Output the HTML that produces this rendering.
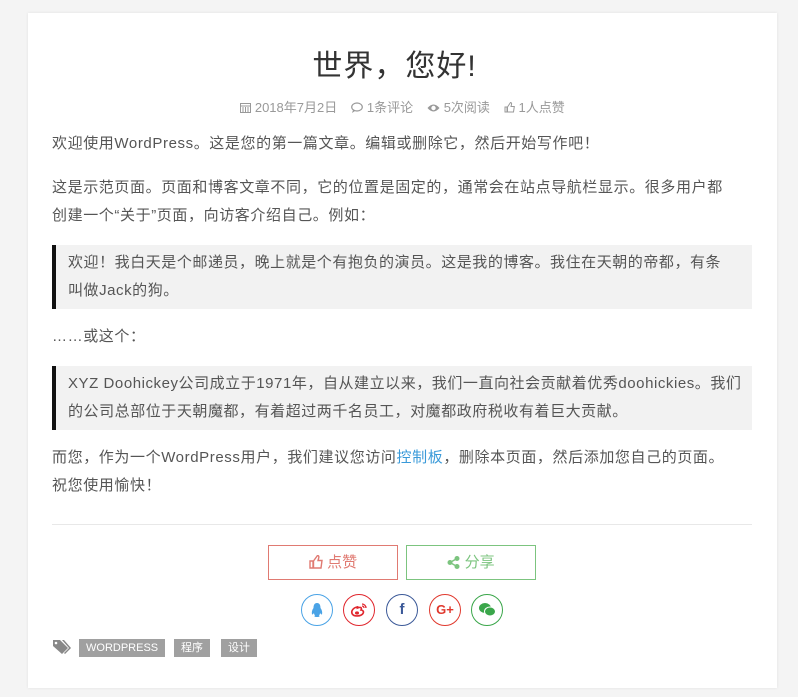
<!DOCTYPE html>
<html><head><meta charset="utf-8"><style>
*{margin:0;padding:0;box-sizing:border-box}
body{width:798px;height:697px;background:#f4f4f4;font-family:"Liberation Sans","Noto Sans CJK SC",sans-serif;color:#333;overflow:hidden}
.card{position:absolute;left:28px;top:13px;width:749px;height:675px;background:#fff;box-shadow:0 0 3px rgba(0,0,0,.08)}
.in{position:absolute;left:24px;width:700px}
h1{position:absolute;top:28px;left:-8px;width:100%;text-align:center;font-weight:normal;font-size:30px;color:#333;letter-spacing:1px}
.meta{position:absolute;top:84px;left:0;width:100%;text-align:center;font-size:13px;color:#999}
.meta span{margin:0 7px}
.meta svg{vertical-align:-1px}
p{font-size:15px;line-height:28px;color:#555;position:absolute;left:0;width:720px;letter-spacing:0.6px;white-space:nowrap}
.bq{position:absolute;left:0;width:700px;background:#f2f2f2;border-left:4px solid #111;padding:4px 12px;font-size:15px;line-height:28px;color:#555;letter-spacing:0.55px;white-space:nowrap;overflow:hidden}
a{color:#3a9ad9;text-decoration:none}
.hr{position:absolute;top:511px;left:0;width:700px;border-top:1px solid #e8e8e8}
.btn{position:absolute;top:532px;width:130px;height:35px;border:1px solid;text-align:center;line-height:33px;font-size:15px}
.btn svg{vertical-align:-2px}
.c{position:absolute;top:581px;width:32px;height:32px;border-radius:50%;border:1px solid;text-align:center;line-height:30px;font-size:15px;font-weight:bold}
.c svg{margin-top:7px}
.tag{position:absolute;top:626px;height:18px;background:#a0a0a0;color:#fff;font-size:11px;line-height:18px;padding:0 7px}
</style></head><body>
<div class="card">
<h1>世界，您好!</h1>
<div class="meta"><span><svg width="11" height="11"><rect x="0.5" y="1.5" width="10" height="9" fill="none" stroke="#999"/><path d="M0 4h11M3 5v5M5.5 5v5M8 5v5" stroke="#999"/></svg> 2018年7月2日</span><span><svg width="12" height="11"><ellipse cx="6" cy="5" rx="5.3" ry="4" fill="none" stroke="#999" stroke-width="1.2"/><path d="M2 8l-1 3 3-2" fill="#999"/></svg> 1条评论</span><span><svg width="13" height="10"><path d="M0.5 5Q6.5-2 12.5 5Q6.5 12 0.5 5z" fill="#999"/><circle cx="6.5" cy="5" r="2.2" fill="#fff"/></svg> 5次阅读</span><span><svg width="11" height="11"><path d="M1 5h2v5H1zM3.5 5l3-4.5c1 0 1.3 1 1 2L7 4.5h3.3l-0.8 5.5H3.5z" fill="none" stroke="#999"/></svg> 1人点赞</span></div>
<div class="in" style="top:0">
<p style="top:117px">欢迎使用WordPress。这是您的第一篇文章。编辑或删除它，然后开始写作吧！</p>
<p style="top:161px">这是示范页面。页面和博客文章不同，它的位置是固定的，通常会在站点导航栏显示。很多用户都<br>创建一个“关于”页面，向访客介绍自己。例如：</p>
<div class="bq" style="top:232px;height:64px">欢迎！我白天是个邮递员，晚上就是个有抱负的演员。这是我的博客。我住在天朝的帝都，有条<br>叫做Jack的狗。</div>
<p style="top:310px">……或这个：</p>
<div class="bq" style="top:353px;height:64px">XYZ Doohickey公司成立于1971年，自从建立以来，我们一直向社会贡献着优秀doohickies。我们<br>的公司总部位于天朝魔都，有着超过两千名员工，对魔都政府税收有着巨大贡献。</div>
<p style="top:431px">而您，作为一个WordPress用户，我们建议您访问<a>控制板</a>，删除本页面，然后添加您自己的页面。<br>祝您使用愉快！</p>
<div class="hr"></div>
</div>
<div class="btn" style="left:240px;border-color:#e07a72;color:#e07a72"><svg width="14" height="14"><path d="M1 6h3v7H1zM4.5 6l4-5.5c1.3 0 1.6 1.2 1.2 2.5L9 5.5h4l-1 7.5H4.5z" fill="none" stroke="#e07a72" stroke-width="1.4"/></svg> 点赞</div>
<div class="btn" style="left:378px;border-color:#7cc47f;color:#7cc47f"><svg width="13" height="13"><circle cx="10" cy="2.5" r="2.5" fill="#7cc47f"/><circle cx="10" cy="10.5" r="2.5" fill="#7cc47f"/><circle cx="3" cy="6.5" r="2.5" fill="#7cc47f"/><path d="M3 6.5L10 2.5M3 6.5L10 10.5" stroke="#7cc47f" stroke-width="1.5"/></svg> 分享</div>
<div class="c" style="left:273px;border-color:#4aa3e6;color:#4aa3e6"><svg width="14" height="16"><path d="M7 1C4 1 3.5 4 3.5 6 2 8 1.5 10 2 12.5c1 0 1.5-1 2-1.5 0 1 .5 2 1 2.5-1 .5-1 1.5 2 1.5s3-1 2-1.5c.5-.5 1-1.5 1-2.5.5.5 1 1.5 2 1.5.5-2.5 0-4.5-1.5-6.5C10.5 4 10 1 7 1z" fill="#4aa3e6"/></svg></div>
<div class="c" style="left:315px;border-color:#e0262d;color:#e0262d"><svg width="18" height="16"><path d="M7 5C3 6 1 9 2 11.5 3.5 15 11 14.5 13 11.5 14.5 9 12 8 11 8c1-2 0-3-2-2.5L7.5 6C8 4.5 8 4.5 7 5z" fill="none" stroke="#e0262d" stroke-width="1.6"/><ellipse cx="7" cy="11" rx="2" ry="1.6" fill="#e0262d"/><path d="M12 2a4 4 0 0 1 4 4M12 4a2 2 0 0 1 2 2" stroke="#e0262d" stroke-width="1.3" fill="none"/></svg></div>
<div class="c" style="left:358px;border-color:#3b5998;color:#3b5998">f</div>
<div class="c" style="left:401px;border-color:#e0382d;color:#e0382d;font-size:13px">G+</div>
<div class="c" style="left:443px;border-color:#3aa64a;color:#3aa64a"><svg width="18" height="15"><ellipse cx="7" cy="6" rx="6" ry="5" fill="#3aa64a"/><ellipse cx="12" cy="9.5" rx="5.5" ry="4.5" fill="#3aa64a" stroke="#fff" stroke-width="1"/></svg></div>
<svg style="position:absolute;left:24px;top:626px" width="20" height="16"><path d="M1 1h7l8 8-6 6-9-8z" fill="#888"/><path d="M10 1h2l7 8-6 6-1-1 5-5z" fill="#888"/><circle cx="4" cy="4" r="1.3" fill="#fff"/></svg>
<div class="tag" style="left:51px">WORDPRESS</div>
<div class="tag" style="left:146px">程序</div>
<div class="tag" style="left:193px">设计</div>
</div>
</body></html>
